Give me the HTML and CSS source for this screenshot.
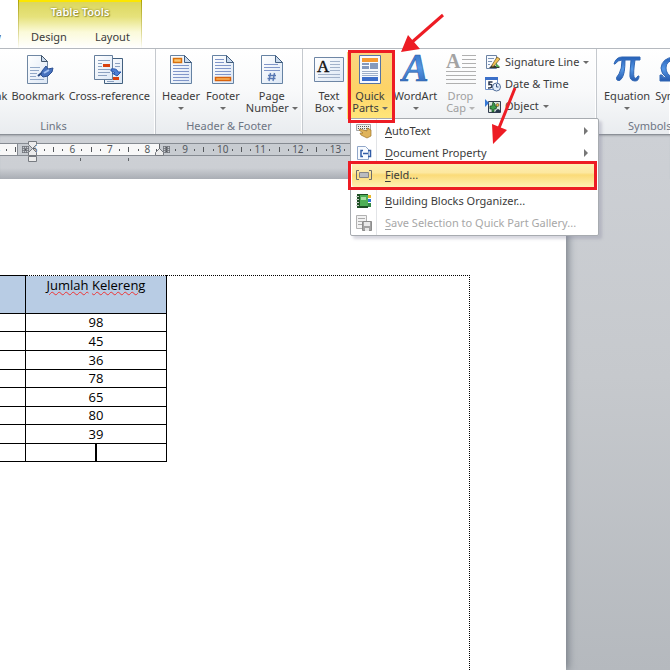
FILE: index.html
```html
<!DOCTYPE html>
<html lang="en">
<head>
<meta charset="utf-8">
<title>Document editor</title>
<link rel="stylesheet" href="styles.css">
</head>
<body>
<svg class="defs" aria-hidden="true">
  <defs>
    <linearGradient id="blue" x1="0" y1="0" x2="0" y2="1"><stop offset="0" stop-color="#2560b8"/><stop offset=".5" stop-color="#5598e6"/><stop offset="1" stop-color="#2559ad"/></linearGradient>
    <linearGradient id="paper" x1="0" y1="0" x2="1" y2="1"><stop offset="0" stop-color="#fff"/><stop offset="1" stop-color="#dce7f5"/></linearGradient>
  </defs>
</svg>
<header class="tabs">
  <span class="tab-rest">w</span>
  <div class="context">
    <div class="context-title">Table Tools</div>
    <nav class="context-tabs"><button>Design</button><button>Layout</button></nav>
  </div>
</header>

<section class="ribbon">
  <div class="group links">
    <div class="tools">
      <button class="tool"><span class="icon"></span><span>Hyperlink</span></button>
      <button class="tool">
        <svg class="icon" viewBox="0 0 32 32"><path d="M5.500 1.500h14l6 6v22h-20z" fill="url(#paper)" stroke="#6f87a3"/><path d="M19.500 1.500v6h6z" fill="#c9d9ec" stroke="#42566c"/><path d="M8 13.500h10M8 16.500h9M8 19.500h7M8 22.500h6M8 25.500h14" stroke="#93a9c8"/><path d="M16 22l6-5" stroke="#27487f" stroke-width="2"/><path d="M20 17l4-5 2 3 5-1-1 4-4 4-5 1-2-2z" fill="#4772be" stroke="#2c5093"/><path d="M22 19l5-3" stroke="#a4c3f3" stroke-width="2"/></svg>
        <span>Bookmark</span></button>
      <button class="tool">
        <svg class="icon" viewBox="0 0 32 32"><path d="M11.500 4.500h18v25h-18z" fill="url(#paper)" stroke="#42607f"/><path d="M1.500 1.500h18v24h-18z" fill="url(#paper)" stroke="#657e9c"/><path d="M5 6.500h12M5 9.500h4M5 12.500h4M5 15.500h12M5 18.500h12M5 21.500h9M22 9.500h5M22 12.500h5M14 27.500h7" stroke="#8ca1c0"/><path d="M10 10h7v3h-7zM20 23h6v3h-6z" fill="#d9400d"/><path d="M18 15q6-1 7 3h3l-4 4-5-3h3q-1-2-4-2z" fill="#4d7fd6" stroke="#2857aa"/></svg>
        <span>Cross-reference</span></button>
    </div>
    <div class="group-name">Links</div>
  </div>

  <div class="group headfoot">
    <div class="tools">
      <button class="tool">
        <svg class="icon" viewBox="0 0 32 32"><path d="M5.500 1.500h14l7 7v21h-21z" fill="url(#paper)" stroke="#6582a3"/><path d="M19.500 1.500v7h7z" fill="#c8d9ed" stroke="#425e80"/><path d="M8.500 4.500h8v4h-8z" fill="#fbc56d" stroke="#d8700c" stroke-width="1.500"/><path d="M8 11.500h16M8 14.500h16M8 17.500h16M8 20.500h16M8 23.500h16M8 26.500h16" stroke="#8096c9"/></svg>
        <span>Header</span><i class="caret"></i></button>
      <button class="tool">
        <svg class="icon" viewBox="0 0 32 32"><path d="M5.500 1.500h14l7 7v21h-21z" fill="url(#paper)" stroke="#6582a3"/><path d="M19.500 1.500v7h7z" fill="#c8d9ed" stroke="#425e80"/><path d="M8 5.500h9M8 8.500h9M8 11.500h16M8 14.500h16M8 17.500h16M8 20.500h16" stroke="#8096c9"/><path d="M8.500 23.500h15v3h-15z" fill="#fbb65a" stroke="#d8620c" stroke-width="1.500"/></svg>
        <span>Footer</span><i class="caret"></i></button>
      <button class="tool">
        <svg class="icon" viewBox="0 0 32 32"><path d="M5.500 1.500h14l7 7v21h-21z" fill="url(#paper)" stroke="#6582a3"/><path d="M19.500 1.500v7h7z" fill="#c8d9ed" stroke="#425e80"/><path d="M8 10.500h14M8 13.500h16M8 16.500h16" stroke="#8096c9"/><path d="M14.500 19l-1.500 8M18.500 19l-1.500 8M12 21.500h8M11.500 24.500h8" stroke="#5878b4" stroke-width="1.400"/></svg>
        <span>Page</span><span>Number <i class="caret"></i></span></button>
    </div>
    <div class="group-name">Header &amp; Footer</div>
  </div>

  <div class="group text">
    <div class="tools">
      <button class="tool">
        <svg class="icon" viewBox="0 0 32 32"><path d="M1.500 3.500h29v24h-29z" fill="url(#paper)" stroke="#6e86a5"/><path d="M17 7.500h10M17 10.500h10M17 13.500h10M17 16.500h10M5 20.500h22M5 23.500h22" stroke="#a2b2ca"/><text x="4" y="18" class="glyph-a">A</text></svg>
        <span>Text</span><span>Box <i class="caret"></i></span></button>
      <button class="tool open" aria-expanded="true">
        <svg class="icon" viewBox="0 0 32 32"><path d="M5.500 1.500h21v28h-21z" fill="#f6f9fe" stroke="#5573a4"/><path d="M8 4h16v4H8z" fill="#f59a31"/><path d="M8 9h7v2H8zM8 12h7v3H8zM16 9h8v6h-8z" fill="#8499bd"/><path d="M8 17.500h16M8 19.500h16M8 21.500h16" stroke="#9eafca"/><path d="M8 23h16v4H8z" fill="#3d6fcb"/></svg>
        <span>Quick</span><span>Parts <i class="caret"></i></span></button>
      <button class="tool">
        <svg class="icon" viewBox="0 0 32 32"><text x="2" y="27" class="glyph-art">A</text></svg>
        <span>WordArt</span><i class="caret"></i></button>
      <button class="tool" disabled>
        <svg class="icon" viewBox="0 0 32 32"><text x="1" y="14" class="glyph-drop">A</text><path d="M17 1.500h14M17 5.500h14M17 9.500h14M17 13.500h14M1 17.500h30M1 21.500h30M1 25.500h30M1 29.500h30" stroke="#b0b0b0"/></svg>
        <span>Drop</span><span>Cap <i class="caret"></i></span></button>
      <div class="stack">
        <button><svg viewBox="0 0 16 16"><path d="M1.500 1.500h10v13h-10z" fill="#f7faff" stroke="#6b82a3"/><path d="M3 4.500h6M3 7.500h4M3 10.500h2" stroke="#7d95b7"/><path d="M4 14l4-4 2 2 2-1 3 3z" fill="#34392e"/><path d="M7 11l5-8 3 2-6 7-2 1z" fill="#f3c455" stroke="#614c26" stroke-width=".7"/><path d="M11 9l4 4-4 0z" fill="#54a451"/></svg>Signature Line <i class="caret"></i></button>
        <button><svg viewBox="0 0 16 16"><path d="M.5 1.500h12v12H.5z" fill="#fff" stroke="#6f91cb"/><path d="M0 1h13v3H0z" fill="#3c70c9"/><path d="M7.500 6H4v2.500q3-.5 3 1.500T3 12" fill="none" stroke="#27344c" stroke-width="1.500"/><circle cx="11.500" cy="11" r="4" fill="#e3eefc" stroke="#526e99"/><path d="M11.500 8v3h2" fill="none" stroke="#3a5481"/></svg>Date &amp; Time</button>
        <button><svg viewBox="0 0 16 16"><path d="M3.500 3.500h12v11h-12z" fill="#dbe8de" stroke="#323d50"/><path d="M0 1l4 4-4 4z" fill="#3779d5"/><path d="M8 4l2 2v2l2 0-1 3H9v3H7v-3H5V8h2z" fill="#3d9d49" stroke="#193f27" stroke-width=".7"/><circle cx="12.500" cy="7" r="1.500" fill="#ebb83d" stroke="#343434" stroke-width=".5"/><path d="M10 14q3-6 6 0z" fill="#25384b"/></svg>Object <i class="caret"></i></button>
      </div>
    </div>
    <div class="group-name">Text</div>
  </div>

  <div class="group symbols">
    <div class="tools">
      <button class="tool">
        <svg class="icon" viewBox="0 0 32 32"><path d="M3 10Q5 3 11 3h18v3h-5q-2 13-1 17 1 3 4-1h1q0 5-4 5-6 0-5-8l1-13h-6q0 14-3 18-2 4-5 2-2-2 2-6 3-5 3-14-4 0-7 4z" fill="url(#blue)" stroke="#3167b4"/></svg>
        <span>Equation</span><i class="caret"></i></button>
      <button class="tool">
        <svg class="icon" viewBox="0 0 32 32"><path d="M2 27v-6h2q1 3 5 3-6-4-6-10Q4 4 16 3q12 1 13 11 0 6-6 10 4 0 5-3h2v6H18v-4q6-3 6-9 0-7-8-8-8 1-8 8 0 6 6 9v4z" fill="url(#blue)" stroke="#3167b4"/></svg>
        <span>Symbol</span><i class="caret"></i></button>
    </div>
    <div class="group-name">Symbols</div>
  </div>
</section>

<main class="workspace">
  <div class="ruler">
    <div class="scale">
      <div class="unit"><i></i><b>4</b><i></i><em></em></div>
      <div class="unit"><i></i><b>5</b><i></i><em></em></div>
      <div class="unit"><i></i><b>6</b><i></i><em></em></div>
      <div class="unit"><i></i><b>7</b><i></i><em></em></div>
      <div class="unit"><i></i><b>8</b><i></i><em></em></div>
      <div class="unit"><i></i><b>9</b><i></i><em></em></div>
      <div class="unit"><i></i><b>10</b><i></i><em></em></div>
      <div class="unit"><i></i><b>11</b><i></i><em></em></div>
      <div class="unit"><i></i><b>12</b><i></i><em></em></div>
      <div class="unit"><i></i><b>13</b><i></i><em></em></div>
    </div>
    <svg class="markers" viewBox="0 0 180 24" aria-hidden="true">
      <path d="M22 6.500h7M22 8.500h7M22 10.500h7M22 12.500h7M22.500 6v7M24.500 6v7M26.500 6v7M28.500 6v7M163 6.500h7M163 8.500h7M163 10.500h7M163 12.500h7M163.500 6v7M165.500 6v7M167.500 6v7M169.500 6v7" stroke="#71757b" stroke-width=".8"/>
      <path d="M28.500 1.500h8v3l-4 4-4-4zM28.500 15.500v-3l4-4 4 4v3zM28.500 16.500h8v5h-8zM155.500 15.500v-3l4-4 4 4v3z" fill="#ececec" stroke="#777b81"/>
      <path d="M159.500 4v5M80.500 18v3M128.500 18v3" stroke="#606468"/>
    </svg>
  </div>
  <article class="page">
    <div class="text-frame">
      <table>
        <thead><tr><th></th><th><span>Jumlah</span> <span>Kelereng</span></th></tr></thead>
        <tbody>
          <tr><td></td><td>98</td></tr>
          <tr><td></td><td>45</td></tr>
          <tr><td></td><td>36</td></tr>
          <tr><td></td><td>78</td></tr>
          <tr><td></td><td>65</td></tr>
          <tr><td></td><td>80</td></tr>
          <tr><td></td><td>39</td></tr>
          <tr><td></td><td><i class="cursor"></i></td></tr>
        </tbody>
      </table>
    </div>
  </article>
</main>

<div class="menu" role="menu">
  <button role="menuitem"><svg viewBox="0 0 16 16"><path d="M.5 1.500h14v6H.5z" fill="#f1f1ec" stroke="#a5a7a9"/><path d="M2 3.500h12M2 5.500h12" stroke="#55585e" stroke-dasharray="1 1"/><path d="M4 6l7 2V5l4 2v6l-4 2-6-3-1-2 3 0-4-3z" fill="#e0b45b" stroke="#9c7228" stroke-width=".7"/></svg><span><u>A</u>utoText</span><i class="arrow"></i></button>
  <button role="menuitem"><svg viewBox="0 0 16 16"><path d="M1.500 1.500h8l3 3v10h-11z" fill="#f8fbff" stroke="#91a7c9"/><path d="M7 5.500H5v6h2M12 5.500h2.500v6H12M7 8.500h5" fill="none" stroke="#315ca7" stroke-width="1.500"/></svg><span><u>D</u>ocument Property</span><i class="arrow"></i></button>
  <button role="menuitem" class="selected"><svg viewBox="0 0 16 16"><path d="M3 3.500H.5v9H3M13 3.500h2.500v9H13" fill="none" stroke="#6c6c6c"/><path d="M3.500 5.500h9v5h-9z" fill="#b9bcc0" stroke="#858585"/></svg><span><u>F</u>ield...</span></button>
  <button role="menuitem"><svg viewBox="0 0 16 16"><path d="M1 1h11v14H1z" fill="#1d4f24"/><path d="M4 2h8v11H4z" fill="#4eaf55"/><path d="M5 4h5v3H5z" fill="#a5dda1"/><path d="M0 3.500h3M0 6.500h3M0 9.500h3M0 12.500h3" stroke="#c5cdc6"/><path d="M12 2h3v3h-3z" fill="#e9b82c"/><path d="M12 6h3v3h-3z" fill="#2f73cf"/><path d="M12 10h3v4h-3z" fill="#338944"/></svg><span><u>B</u>uilding Blocks Organizer...</span></button>
  <button role="menuitem" disabled><svg viewBox="0 0 16 16"><path d="M.5.500h10v13H.5z" fill="#f2f2f2" stroke="#b1b1b1"/><path d="M2 3.500h7M2 6.500h4M2 9.500h4" stroke="#aaa"/><path d="M6.500 6.500h9v9h-9z" fill="#a3a3a3" stroke="#8c8c8c"/><path d="M8 7h6v4H8zM9 13h4v3H9z" fill="#e9e9e9"/></svg><span><u>S</u>ave Selection to Quick Part Gallery...</span></button>
</div>

<svg class="callouts" viewBox="0 0 670 670" aria-hidden="true">
  <g fill="none" stroke="#ed1c24" stroke-width="3">
    <path d="M349.500 51.500h44v70h-44zM349.500 162.500h246v26h-246z"/>
    <path d="M443 15L411 43M515 88L499 128"/>
  </g>
  <path d="M401 52l7-17 12 14zM493 144l-1-20 15 6z" fill="#ed1c24"/>
</svg>
</body>
</html>
```
FILE: styles.css
```css
* { box-sizing: border-box; }
body {
  margin: 0;
  height: 100vh;
  display: flex;
  flex-direction: column;
  position: relative;
  overflow: hidden;
  background: #fff;
  color: #3b3b3b;
  font: 11px/12px "Noto Sans", "Open Sans", sans-serif;
}
button {
  border: 0;
  padding: 0;
  background: none;
  font: inherit;
  color: inherit;
  white-space: nowrap;
}
.defs { position: absolute; width: 0; height: 0; }

.tabs {
  display: flex;
  height: 48px;
  flex: none;
}
.tab-rest {
  width: 18px;
  padding-top: 31px;
  direction: rtl;
  padding-right: 17px;
}
.context {
  width: 124px;
  border: solid #c9c04a;
  border-width: 0 1px;
  border-image: linear-gradient(#aaa100, #e0dc9d 70%, #fff) 1;
  border-top: 0;
  background: linear-gradient(#fce600 0 2px, #dcd75d 2px, #e6e27c 17px, #fbfad9 32px, #fff);
}
.context-title {
  padding-top: 6px;
  height: 31px;
  text-align: center;
  color: #fff;
  font-weight: 600;
  text-shadow: 0 0 2px #77731c, 1px 1px 1px #a49e35;
}
.context-tabs { display: flex; padding-left: 12px; gap: 28px; }

.ribbon {
  display: flex;
  flex: none;
  height: 87px;
  border-top: 1px solid #b5b9bf;
  border-bottom: 1px solid #8b9097;
  background: linear-gradient(#fff, #f8f9fa 50%, #e9ecef);
}
.group {
  display: flex;
  flex-direction: column;
  flex: none;
  border-right: 1px solid #c5c9ce;
  box-shadow: inset -1px 0 #fff;
  overflow: hidden;
}
.links { width: 156px; }
.headfoot { width: 147px; }
.text { width: 294px; }
.symbols { flex: 1 0 0; border-right: 0; }
.tools { display: flex; height: 70px; padding-top: 5px; }
.group-name { color: #6d7583; text-align: center; padding-top: 1px; }
.links .group-name { padding-right: 48px; }
.symbols .group-name { padding-left: 31px; text-align: left; }
.tool {
  display: flex;
  flex-direction: column;
  align-items: center;
  flex: none;
}
.icon { width: 32px; height: 32px; margin-bottom: 4px; flex: none; }
.tool > .caret { margin-top: 5px; }
.caret {
  display: inline-block;
  border: solid transparent;
  border-width: 3px 3px 0;
  border-top-color: #6b6b6b;
  vertical-align: 2px;
}
.links .tools { justify-content: flex-end; gap: 4px; padding-right: 5px; }
.headfoot .tools { padding-left: 6px; gap: 6px; }
.text .tools { padding-left: 8px; }
.text .tool { width: 45px; margin-bottom: 8px; }
.text .tool:nth-child(1) { width: 36px; }
.text .tool.open {
  width: 46px;
  margin-top: -2px;
  padding-top: 2px;
  margin-bottom: 0;
  background: linear-gradient(#fbd680, #fdd367 55%, #ffe67a);
}
.tool:disabled { color: #a0a0a0; }
.tool:disabled .caret { border-top-color: #b5b5b5; }
.glyph-a { font: 17px "Liberation Serif", serif; fill: #111; stroke: #111; stroke-width: 0.4; }
.glyph-drop { font: bold 20px "Liberation Serif", serif; fill: #a3a3a3; }
.glyph-art { font: italic bold 40px "Liberation Serif", serif; fill: url(#blue); stroke: #2d5ca5; stroke-width: 0.6; }
.stack { display: flex; flex-direction: column; padding-left: 2px; margin-top: -3px; }
.stack button { display: flex; align-items: center; height: 22px; gap: 4px; }
.stack svg { width: 16px; height: 16px; }
.symbols .tools { padding-left: 7px; gap: 5px; }

.workspace {
  flex: 1;
  min-height: 0;
  display: flex;
  flex-direction: column;
  background: linear-gradient(#cdd0d5, #c6c9cd 45%, #b5b9be);
}
.ruler {
  position: relative;
  flex: none;
  height: 44px;
  padding-top: 8px;
  box-shadow: inset 0 2px 2px -1px #a3a7ad;
  background: linear-gradient(transparent 75%, #a9adb4);
  background-size: 566px 100%;
  background-repeat: no-repeat;
}
.scale {
  display: flex;
  width: 359px;
  height: 13px;
  overflow: hidden;
  border: solid #868b92;
  border-width: 1px 0;
  background: linear-gradient(90deg, #f8f8f8 17px, #868b92 17px 18px, #c8ccd1 18px 36px, #f8f8f8 36px 159px, #c8ccd1 159px);
}
.unit {
  flex: 1 0 0;
  display: grid;
  grid-template-columns: repeat(4, 1fr);
  place-items: center;
}
.unit:first-child { margin-left: -17px; }
.unit > * { min-width: 0; }
.unit b { font-size: 10px; font-weight: 400; line-height: 11px; width: 9px; display: flex; justify-content: center; color: #54585e; }
.unit i { width: 1px; height: 2px; background: #55585c; }
.unit em { width: 1px; height: 5px; background: #55585c; }
.markers { position: absolute; left: 0; top: 5px; width: 180px; height: 24px; }
.page {
  flex: 1;
  width: 566px;
  padding: 96px 96px 0 0;
  background: #fff;
  box-shadow: 2px 0 8px #747b84;
  clip-path: inset(0 -12px 0 0);
}
.text-frame {
  height: 100%;
  border: dotted #000;
  border-width: 1px 1px 0 0;
}
table {
  border-collapse: collapse;
  table-layout: fixed;
  width: 168px;
  margin: -1px 0 0 -1px;
  color: #000;
  font: 13px/17px "Open Sans", sans-serif;
}
th, td { border: 1px solid #000; padding: 0; text-align: center; height: 19px; }
tbody tr:first-child td,
tbody tr:nth-child(2n+4) td { height: 18px; }
th {
  height: 38px;
  padding-top: 1px;
  border-top: 1px dotted #000;
  background: #b8cce4;
  font-weight: 400;
  vertical-align: top;
}
th:first-child { width: 26px; }
th span { text-decoration: underline wavy #e33 1px; text-underline-offset: 1px; }
.cursor { display: block; width: 2px; height: 17px; margin: 0 auto; background: #000; }

.menu {
  position: absolute;
  left: 350px;
  top: 118px;
  width: 249px;
  padding: 1px;
  border: 1px solid #a7abb0;
  border-radius: 0 2px 2px 2px;
  background: linear-gradient(90deg, #fff 25px, #e2e4e7 25px 26px, #fff 26px);
  box-shadow: 3px 3px 3px #8888a055;
}
.menu button {
  display: flex;
  align-items: center;
  width: 100%;
  height: 22px;
  padding-left: 4px;
  gap: 13px;
  text-align: left;
}
.menu svg { width: 16px; height: 16px; flex: none; }
.menu u { text-underline-offset: 2px; }
.menu .selected {
  height: 24px;
  margin: -1px 0 3px;
  border-radius: 2px;
  background: linear-gradient(#fff0b5, #fde8a0 40%, #fbdb78 50%, #fff0b3);
}
.menu button:disabled { color: #a7a7a7; }
.arrow {
  margin-left: auto;
  margin-right: 9px;
  border: solid transparent;
  border-width: 4px 0 4px 4px;
  border-left-color: #777;
}
.callouts {
  position: absolute;
  left: 0;
  top: 0;
  width: 670px;
  height: 670px;
  pointer-events: none;
}
```
